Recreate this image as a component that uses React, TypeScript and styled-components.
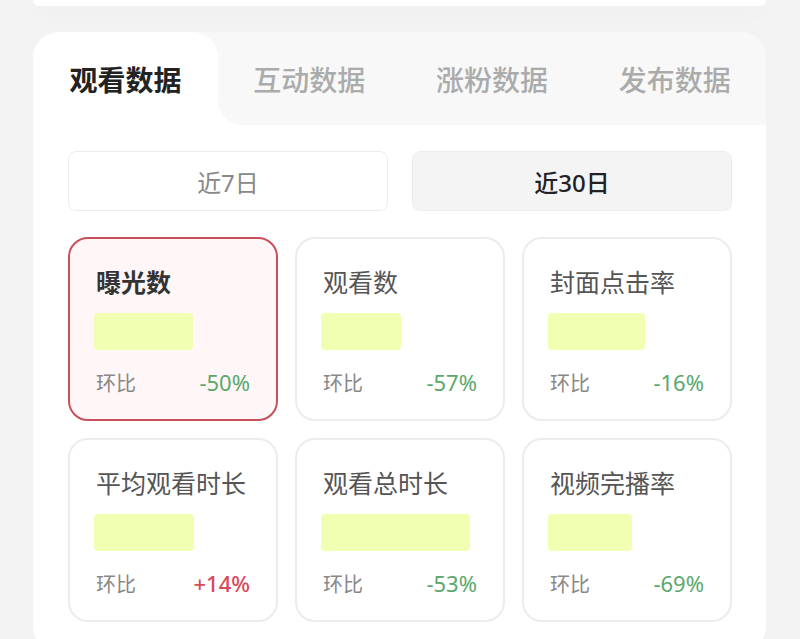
import { useState } from 'react';
import styled, { createGlobalStyle } from 'styled-components';

const GlobalStyle = createGlobalStyle`
  html, body {
    margin: 0;
    padding: 0;
    background: #f3f3f3;
    font-family: "Noto Sans", "Noto Sans CJK SC", sans-serif;
  }
  * { box-sizing: border-box; }
`;

const Page = styled.div`
  padding: 0 34px 0 33px;
  height: 639px;
  overflow: hidden;
`;

const TopCard = styled.div`
  height: 6px;
  background: #fff;
  border-radius: 0 0 24px 24px;
  box-shadow: 0 6px 18px rgba(0, 0, 0, 0.04);
  margin-bottom: 26px;
`;

const Card = styled.div`
  background: #fff;
  border-radius: 26px;
  overflow: hidden;
  padding-bottom: 30px;
`;

const TabBar = styled.div`
  display: flex;
  height: 93px;
  background: #f8f8f8;
`;

const ActiveTab = styled.div`
  width: 185px;
  display: flex;
  align-items: center;
  justify-content: center;
  background: #fff;
  border-radius: 26px 26px 0 0;
  font-size: 28px;
  font-weight: 700;
  color: #222;
`;

const RestWrap = styled.div`
  flex: 1;
  background: #fff;
`;

const RestInner = styled.div`
  height: 100%;
  display: flex;
  background: #f8f8f8;
  border-bottom-left-radius: 24px;
`;

const Tab = styled.div`
  flex: 1;
  display: flex;
  align-items: center;
  justify-content: center;
  font-size: 28px;
  font-weight: 500;
  color: #ababab;
`;

const Body = styled.div`
  padding: 26px 34px 0 35px;
`;

const Segment = styled.div`
  display: grid;
  grid-template-columns: 1fr 1fr;
  gap: 24px;
  margin-bottom: 26px;
`;

const SegButton = styled.div<{ $active: boolean }>`
  height: 60px;
  display: flex;
  align-items: center;
  justify-content: center;
  border-radius: 8px;
  border: 1px solid #ececec;
  background: ${p => (p.$active ? '#f4f4f4' : '#fff')};
  color: ${p => (p.$active ? '#222' : '#888')};
  font-size: 24px;
  font-weight: ${p => (p.$active ? 500 : 400)};
`;

const Grid = styled.div`
  display: grid;
  grid-template-columns: repeat(3, 1fr);
  column-gap: 17px;
  row-gap: 17px;
`;

const Metric = styled.div<{ $selected: boolean }>`
  height: 184px;
  border-radius: 20px;
  border: 2px solid ${p => (p.$selected ? '#c9505b' : '#ececec')};
  background: ${p => (p.$selected ? '#fff6f8' : '#fff')};
  padding: 26px 26px 0 26px;
  display: flex;
  flex-direction: column;
`;

const MetricTitle = styled.div<{ $selected: boolean }>`
  font-size: 25px;
  line-height: 34px;
  font-weight: ${p => (p.$selected ? 700 : 400)};
  color: ${p => (p.$selected ? '#333' : '#555')};
  white-space: nowrap;
`;

const ValueBlock = styled.div`
  height: 37px;
  margin-top: 14px;
  margin-left: -2px;
  border-radius: 4px;
  background: #f0ffb2;
`;

const Footer = styled.div`
  display: flex;
  justify-content: space-between;
  align-items: baseline;
  margin-top: 17px;
  font-size: 20px;
  line-height: 30px;
`;

const FooterLabel = styled.span`
  color: #888;
`;

const Change = styled.span<{ $up: boolean }>`
  font-size: 22px;
  color: ${p => (p.$up ? '#d8495a' : '#5aa86c')};
  font-weight: ${p => (p.$up ? 500 : 400)};
`;

interface MetricItem {
  title: string;
  barWidth: number;
  change: string;
}

const metrics: MetricItem[] = [
  { title: '曝光数', barWidth: 99, change: '-50%' },
  { title: '观看数', barWidth: 80, change: '-57%' },
  { title: '封面点击率', barWidth: 97, change: '-16%' },
  { title: '平均观看时长', barWidth: 100, change: '+14%' },
  { title: '观看总时长', barWidth: 149, change: '-53%' },
  { title: '视频完播率', barWidth: 84, change: '-69%' },
];

const tabs = ['观看数据', '互动数据', '涨粉数据', '发布数据'];

export default function App() {
  const [range, setRange] = useState(30);
  const [selected, setSelected] = useState(0);

  return (
    <>
      <GlobalStyle />
      <Page>
        <TopCard />
        <Card>
          <TabBar>
            <ActiveTab>{tabs[0]}</ActiveTab>
            <RestWrap>
              <RestInner>
                {tabs.slice(1).map(t => (
                  <Tab key={t}>{t}</Tab>
                ))}
              </RestInner>
            </RestWrap>
          </TabBar>
          <Body>
            <Segment>
              <SegButton $active={range === 7} onClick={() => setRange(7)}>近7日</SegButton>
              <SegButton $active={range === 30} onClick={() => setRange(30)}>近30日</SegButton>
            </Segment>
            <Grid>
              {metrics.map((m, i) => (
                <Metric key={m.title} $selected={selected === i} onClick={() => setSelected(i)}>
                  <MetricTitle $selected={selected === i}>{m.title}</MetricTitle>
                  <ValueBlock style={{ width: m.barWidth }} />
                  <Footer>
                    <FooterLabel>环比</FooterLabel>
                    <Change $up={m.change.startsWith('+')}>{m.change}</Change>
                  </Footer>
                </Metric>
              ))}
            </Grid>
          </Body>
        </Card>
      </Page>
    </>
  );
}
